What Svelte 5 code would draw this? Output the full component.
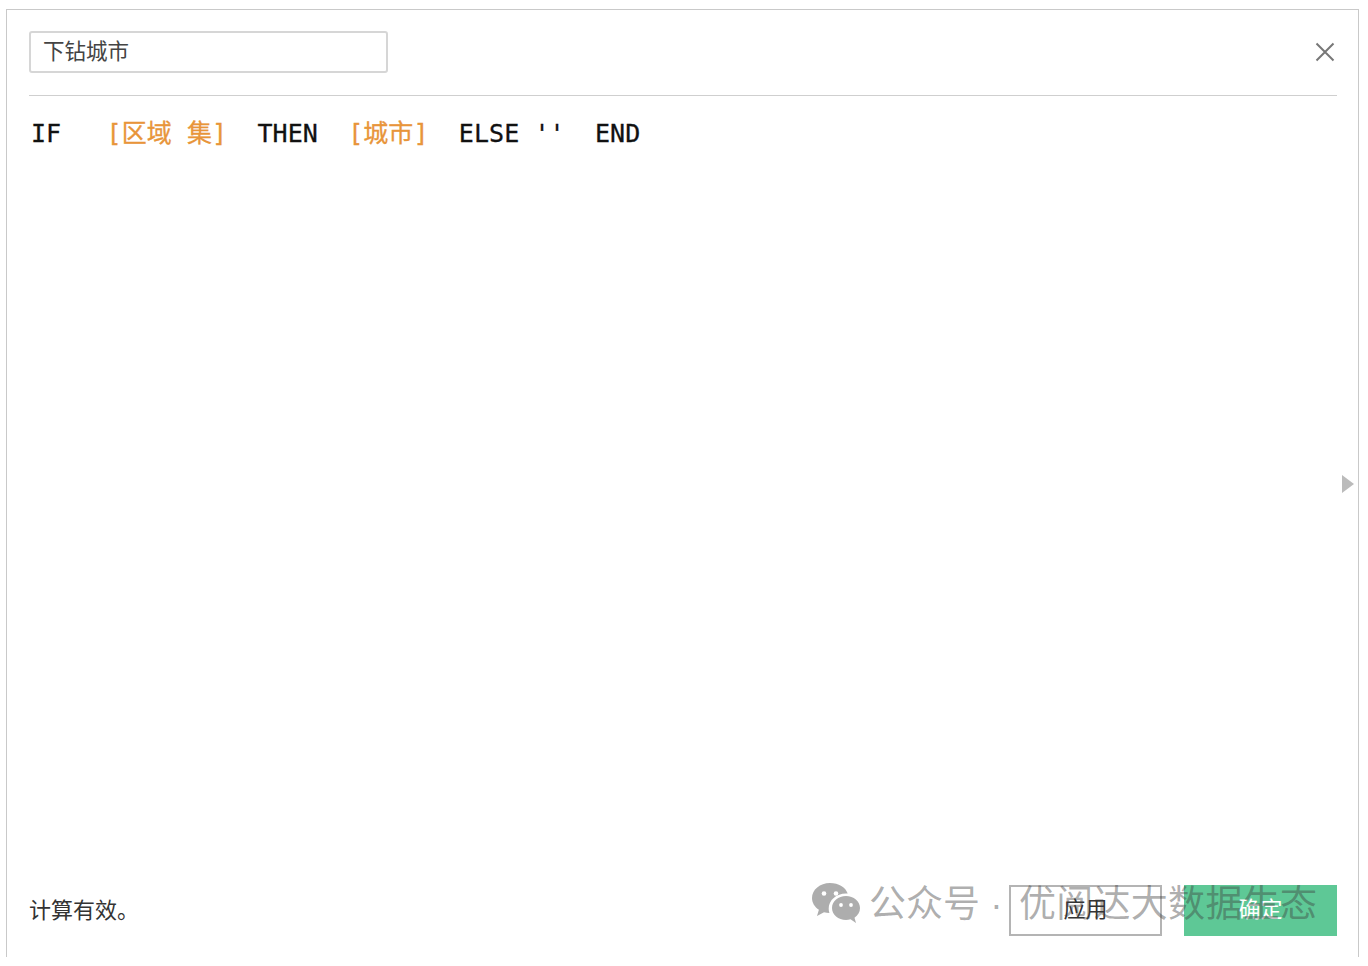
<script>
  let name = '下钻城市'
</script>

<div class="dialog">
  <header class="head">
    <input class="name" bind:value={name} />
    <button class="close" aria-label="关闭">
      <svg viewBox="0 0 20 20" width="20" height="20">
        <path d="M1.500 1.500 18.500 18.500M18.500 1.500 1.500 18.500" />
      </svg>
    </button>
  </header>

  <pre class="editor">IF   <span class="field">[区域 集]</span>  THEN  <span class="field">[城市]</span>  ELSE ''  END</pre>

  <footer class="foot">
    <span class="status">计算有效。</span>
    <div class="actions">
      <button class="btn">应用</button>
      <button class="btn primary">确定</button>
    </div>
  </footer>

  <span class="expand"></span>

  <div class="watermark">
    <svg viewBox="0 0 48 40" width="48" height="40">
      <path class="bubble" d="M18 0C8 0 0 6.700 0 15c0 4.800 2.700 9 6.900 11.800L5 33l7-3.800c1.800.5 3.500.8 5.400.9-.5-1.500-.7-3-.7-4.600 0-8.300 7.700-15 17.300-15 .6 0 1.100 0 1.700.1C33.900 4.500 26.600 0 18 0z" />
      <circle class="eye" cx="12" cy="10.500" r="2.300" />
      <circle class="eye" cx="24" cy="10.500" r="2.300" />
      <path class="bubble" d="M34 13c-7.700 0-14 5.400-14 12s6.300 12 14 12c1.600 0 3.100-.2 4.500-.7L44 40l-1.500-5.200C45.900 32.500 48 29 48 25c0-6.600-6.300-12-14-12z" />
      <circle class="eye" cx="29" cy="22" r="1.900" />
      <circle class="eye" cx="39" cy="22" r="1.900" />
    </svg>
    <span>公众号 · <span class="brand">优阅达大数据生态</span></span>
  </div>
</div>

<style>
  :global(body) {
    margin: 0;
    background: #fff;
  }

  .dialog {
    position: relative;
    box-sizing: border-box;
    display: flex;
    flex-direction: column;
    width: 1353px;
    height: 948px;
    margin: 9px 0 0 6px;
    padding: 0 21px 21px 22px;
    border: solid #c9c9c9;
    border-width: 1.500px 1.500px 0 1.500px;
    font-family: "Noto Sans CJK SC", sans-serif;
    color: #333;
  }

  .head {
    display: flex;
    align-items: center;
    justify-content: space-between;
    height: 85px;
    border-bottom: 1.500px solid #cfcfcf;
  }

  .name {
    box-sizing: border-box;
    width: 359px;
    height: 42px;
    margin: 0 0 2px;
    padding: 0 12px 4px;
    border: 2px solid #d6d6d6;
    border-radius: 3px;
    outline: none;
    font: 21.500px "Noto Sans CJK SC", sans-serif;
    color: #444;
  }

  .close {
    display: flex;
    margin: 0 2px 2px 0;
    padding: 0;
    border: 0;
    background: none;
  }

  .close path {
    fill: none;
    stroke: #777;
    stroke-width: 2;
  }

  .editor {
    flex: 1;
    margin: 0;
    padding: 20px 0 0 2px;
    font: 25px/36px "DejaVu Sans Mono", "Noto Sans CJK SC", monospace;
    letter-spacing: 0.07px;
    -webkit-text-stroke: 0.3px currentColor;
    color: #111;
  }

  .field {
    color: #e8953a;
  }

  .foot {
    display: flex;
    align-items: center;
    justify-content: space-between;
  }

  .status {
    font-size: 22px;
    padding-bottom: 6px;
    color: #333;
  }

  .actions {
    display: flex;
    gap: 22px;
  }

  .btn {
    box-sizing: border-box;
    width: 153px;
    height: 51px;
    padding: 0 0 8px;
    border: 2px solid #b4b4b4;
    background: #fff;
    font: 22px "Noto Sans CJK SC", sans-serif;
    color: #333;
  }

  .btn.primary {
    border: 0;
    background: #5ec896;
    color: #fff;
  }

  .expand {
    position: absolute;
    top: 465px;
    right: 4px;
    border-left: 12px solid #bbb;
    border-top: 9px solid transparent;
    border-bottom: 9px solid transparent;
  }

  .watermark {
    position: absolute;
    left: 805px;
    top: 867px;
    display: flex;
    align-items: center;
    gap: 9px;
    font: 37px/56px "Liberation Sans", "Noto Sans CJK SC", sans-serif;
    white-space: nowrap;
    color: rgba(60, 60, 60, 0.42);
    pointer-events: none;
  }

  .watermark svg {
    margin-top: -4px;
  }

  .brand {
    margin-left: 6px;
    letter-spacing: 0.3px;
  }

  .bubble {
    fill: rgba(60, 60, 60, 0.42);
  }

  .eye {
    fill: #fff;
  }
</style>
